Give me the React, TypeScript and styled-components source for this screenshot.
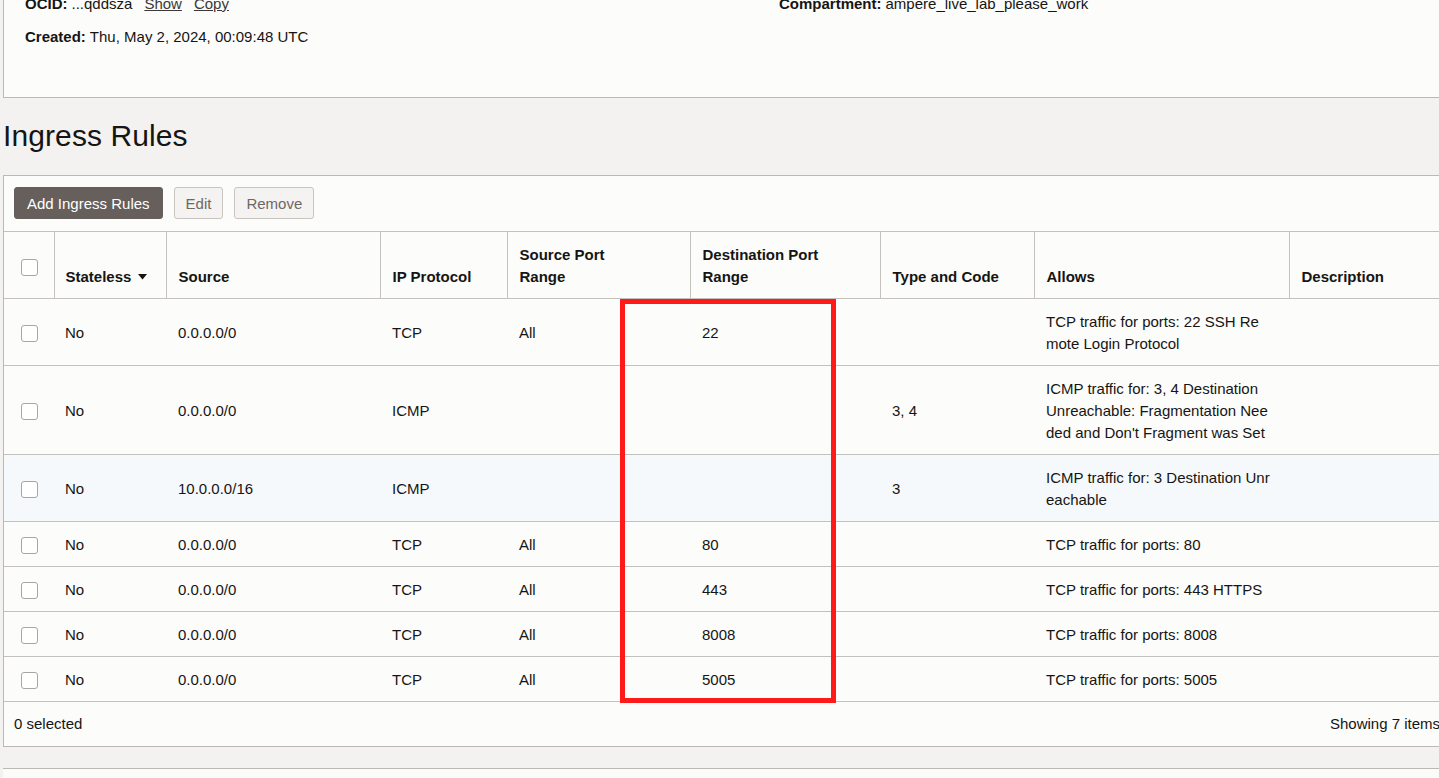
import React from "react";
import styled, { createGlobalStyle } from "styled-components";

const GlobalStyle = createGlobalStyle`
  html, body {
    margin: 0;
    background: #f3f2f1;
    overflow: hidden;
  }
  body {
    font-family: "Liberation Sans", Arial, sans-serif;
    font-size: 15px;
    color: #161513;
  }
`;

// 페이지 전체 (스크롤된 상태라 위로 조금 올라가 있음)
const Page = styled.div`
  margin-top: -7px;
  padding-left: 3px;
  width: 1449px;
`;

// 상단 상세 정보 패널
const DetailsPanel = styled.div`
  background: #fcfcfb;
  border: 1px solid #bdb8b3;
  border-top: none;
  padding: 0 21px 49px;
  display: grid;
  grid-template-columns: 754px 1fr;
  row-gap: 11px;
  line-height: 22px;
`;

const DetailItem = styled.div`
  white-space: nowrap;
`;

const Label = styled.b`
  font-weight: 700;
  margin-right: 4px;
`;

const LinkText = styled.a`
  color: #3b3835;
  text-decoration: underline;
  margin-left: 12px;
`;

const Heading = styled.h2`
  margin: 20px 0 21px;
  font-size: 30px;
  line-height: 36px;
  font-weight: 400;
  letter-spacing: 0.1px;
`;

// 테이블 패널
const TablePanel = styled.div`
  position: relative;
  background: #fcfcfb;
  border: 1px solid #bdb8b3;
`;

const Toolbar = styled.div`
  display: flex;
  gap: 11px;
  padding: 11px 10px 12px;
`;

const Button = styled.button<{ $primary?: boolean }>`
  height: 32px;
  padding: 0 ${(p) => (p.$primary ? "12px" : "11px")};
  border-radius: 3px;
  font-family: inherit;
  font-size: 15px;
  border: 1px solid ${(p) => (p.$primary ? "#665f5b" : "#c8c4c0")};
  background: ${(p) => (p.$primary ? "#665f5b" : "#f4f3f1")};
  color: ${(p) => (p.$primary ? "#ffffff" : "#6d6864")};
`;

const Table = styled.table`
  width: 100%;
  table-layout: fixed;
  border-collapse: collapse;
  line-height: 22px;
`;

const HeadCell = styled.th<{ $center?: boolean }>`
  text-align: ${(p) => (p.$center ? "center" : "left")};
  vertical-align: ${(p) => (p.$center ? "middle" : "bottom")};
  font-weight: 700;
  padding: 12px 11px 10px 12px;
  border-top: 1px solid #c4c0bc;
  border-bottom: 1px solid #c4c0bc;
  border-right: 1px solid #c4c0bc;
  &:nth-child(2) {
    padding-left: 11px;
  }
  &:last-child {
    border-right: none;
  }
`;

const Row = styled.tr<{ $active?: boolean }>`
  background: ${(p) => (p.$active ? "#f5f9fc" : "transparent")};
  border-bottom: 1px solid #c4c0bc;
`;

const Cell = styled.td<{ $center?: boolean }>`
  padding: 12px 11px 10px 12px;
  vertical-align: middle;
  text-align: ${(p) => (p.$center ? "center" : "left")};
  &:nth-child(2) {
    padding-left: 11px;
  }
`;

const CheckCell = styled(Cell)`
  padding: 11px 11px;
`;

const Line = styled.span`
  display: block;
  white-space: nowrap;
`;

const CheckBox = styled.span`
  display: inline-block;
  width: 15px;
  height: 15px;
  border: 1px solid #aaa5a0;
  border-radius: 3px;
  background: #ffffff;
  vertical-align: middle;
`;

const SortHead = styled.span`
  display: inline-flex;
  align-items: center;
  gap: 7px;
`;

const Footer = styled.div`
  display: flex;
  justify-content: space-between;
  padding: 11px 11px 11px 10px;
  line-height: 22px;
  white-space: nowrap;
`;

// 빨간 강조 표시 (스크린샷 주석)
const Highlight = styled.div`
  position: absolute;
  left: 616px;
  top: 123px;
  width: 206px;
  height: 394px;
  border: 5px solid #ff1a1a;
`;

const NextPanel = styled.div`
  margin-top: 21px;
  height: 40px;
  background: #fbfbfa;
  border-top: 1px solid #bdb8b3;
`;

const colWidths = [50, 112, 214, 127, 183, 190, 154, 255];

const rules = [
  {
    source: "0.0.0.0/0",
    protocol: "TCP",
    srcPort: "All",
    dstPort: "22",
    typeCode: "",
    allows: ["TCP traffic for ports: 22 SSH Re", "mote Login Protocol"],
  },
  {
    source: "0.0.0.0/0",
    protocol: "ICMP",
    srcPort: "",
    dstPort: "",
    typeCode: "3, 4",
    allows: [
      "ICMP traffic for: 3, 4 Destination",
      "Unreachable: Fragmentation Nee",
      "ded and Don't Fragment was Set",
    ],
  },
  {
    source: "10.0.0.0/16",
    protocol: "ICMP",
    srcPort: "",
    dstPort: "",
    typeCode: "3",
    allows: ["ICMP traffic for: 3 Destination Unr", "eachable"],
    active: true,
  },
  { source: "0.0.0.0/0", protocol: "TCP", srcPort: "All", dstPort: "80", typeCode: "", allows: ["TCP traffic for ports: 80"] },
  { source: "0.0.0.0/0", protocol: "TCP", srcPort: "All", dstPort: "443", typeCode: "", allows: ["TCP traffic for ports: 443 HTTPS"] },
  { source: "0.0.0.0/0", protocol: "TCP", srcPort: "All", dstPort: "8008", typeCode: "", allows: ["TCP traffic for ports: 8008"] },
  { source: "0.0.0.0/0", protocol: "TCP", srcPort: "All", dstPort: "5005", typeCode: "", allows: ["TCP traffic for ports: 5005"] },
];

function App() {
  return (
    <>
      <GlobalStyle />
      <Page>
        <DetailsPanel>
          <DetailItem>
            <Label>OCID:</Label>...qddsza
            <LinkText>Show</LinkText>
            <LinkText>Copy</LinkText>
          </DetailItem>
          <DetailItem>
            <Label>Compartment:</Label>ampere_live_lab_please_work
          </DetailItem>
          <DetailItem>
            <Label>Created:</Label>Thu, May 2, 2024, 00:09:48 UTC
          </DetailItem>
          <DetailItem />
        </DetailsPanel>

        <Heading>Ingress Rules</Heading>

        <TablePanel>
          <Toolbar>
            <Button $primary>Add Ingress Rules</Button>
            <Button>Edit</Button>
            <Button>Remove</Button>
          </Toolbar>
          <Table>
            <colgroup>
              {colWidths.map((w, i) => (
                <col key={i} style={{ width: w }} />
              ))}
              <col />
            </colgroup>
            <thead>
              <tr>
                <HeadCell $center>
                  <CheckBox />
                </HeadCell>
                <HeadCell>
                  <SortHead>
                    Stateless
                    <svg width="9" height="6" viewBox="0 0 9 6">
                      <path d="M0 0 H9 L4.5 5.5 Z" fill="#161513" />
                    </svg>
                  </SortHead>
                </HeadCell>
                <HeadCell>Source</HeadCell>
                <HeadCell>IP Protocol</HeadCell>
                <HeadCell>
                  Source Port
                  <br />
                  Range
                </HeadCell>
                <HeadCell>
                  Destination Port
                  <br />
                  Range
                </HeadCell>
                <HeadCell>Type and Code</HeadCell>
                <HeadCell>Allows</HeadCell>
                <HeadCell>Description</HeadCell>
              </tr>
            </thead>
            <tbody>
              {rules.map((r, i) => (
                <Row key={i} $active={r.active}>
                  <CheckCell $center>
                    <CheckBox />
                  </CheckCell>
                  <Cell>No</Cell>
                  <Cell>{r.source}</Cell>
                  <Cell>{r.protocol}</Cell>
                  <Cell>{r.srcPort}</Cell>
                  <Cell>{r.dstPort}</Cell>
                  <Cell>{r.typeCode}</Cell>
                  <Cell>
                    {r.allows.map((l) => (
                      <Line key={l}>{l}</Line>
                    ))}
                  </Cell>
                  <Cell />
                </Row>
              ))}
            </tbody>
          </Table>
          <Footer>
            <span>0 selected</span>
            <span>Showing 7 items</span>
          </Footer>
          <Highlight />
        </TablePanel>

        <NextPanel />
      </Page>
    </>
  );
}

export default App;
